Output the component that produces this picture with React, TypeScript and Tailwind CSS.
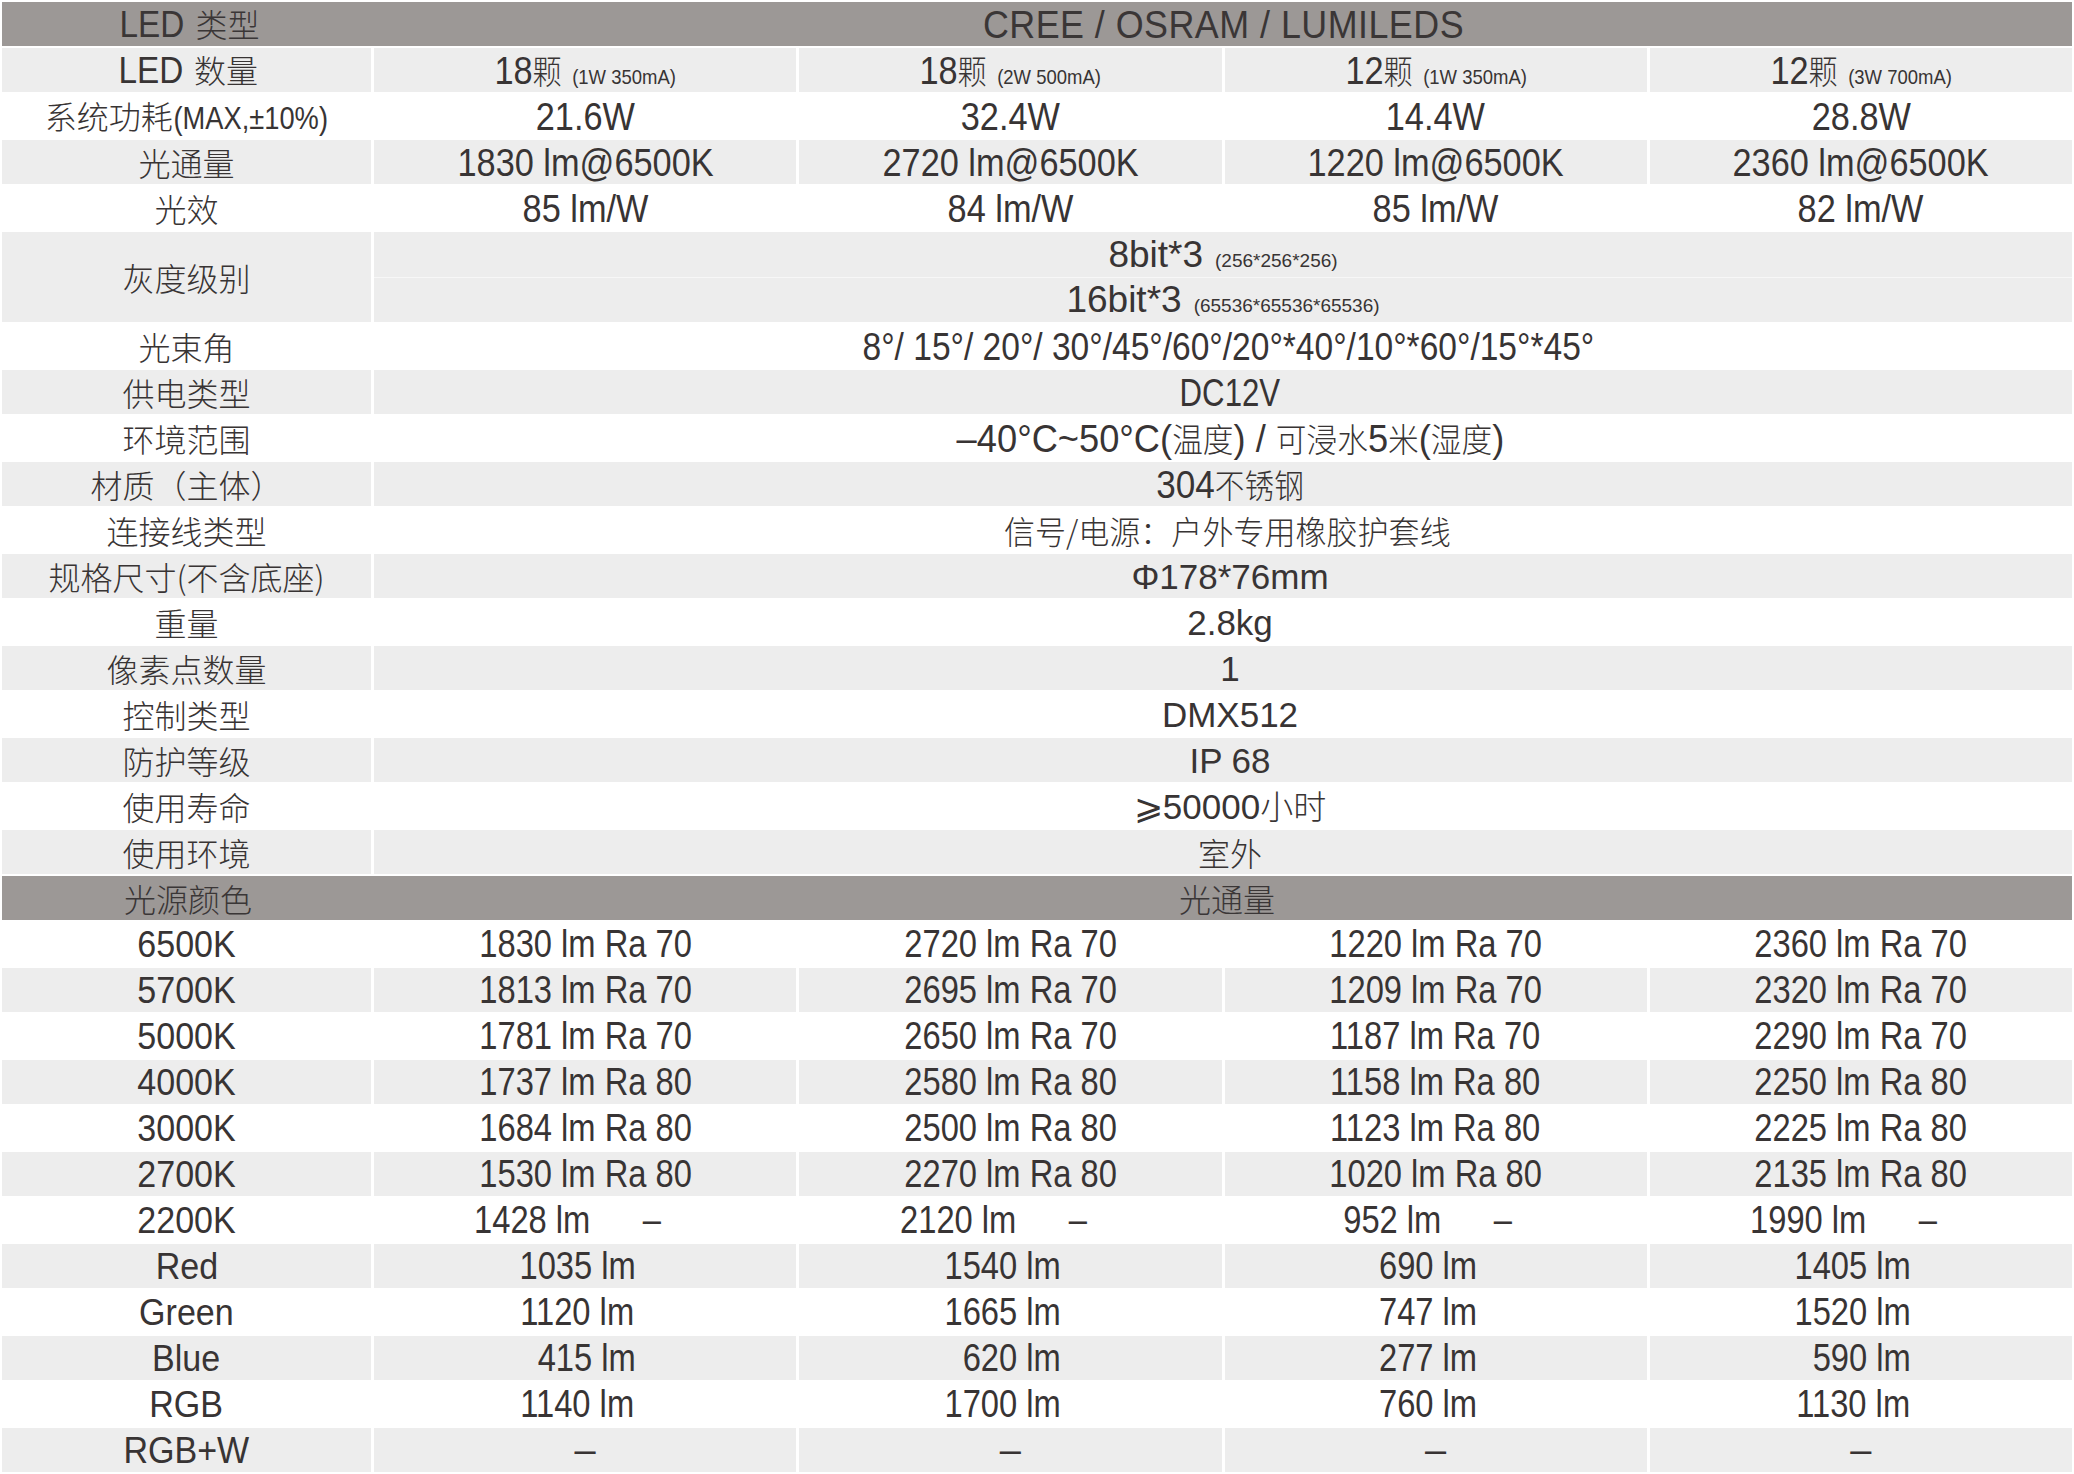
import type { ReactNode } from 'react'

const NARROW = "font-['Liberation_Sans','Noto_Sans_CJK_SC',sans-serif]"
const CJK = "font-['Noto_Sans_CJK_SC','Liberation_Sans',sans-serif] font-light"
const WIDE = "font-['Liberation_Sans','Noto_Sans_CJK_SC',sans-serif]"

type CellProps = { children?: ReactNode; gray?: boolean; className?: string; sx?: string }

function Cell({ children, gray, className = '', sx = '' }: CellProps) {
  return (
    <div
      className={`flex items-center justify-center leading-none text-[#383434] ${
        gray ? 'bg-[#ededed]' : 'bg-white'
      } ${className}`}
    >
      <span className={`whitespace-pre ${sx}`}>{children}</span>
    </div>
  )
}

function Label({ children, gray, className = '' }: CellProps) {
  return (
    <Cell gray={gray} className={`${CJK} text-[32px] ${className}`}>
      {children}
    </Cell>
  )
}

function Small({ children, className = 'text-[21px]' }: { children: ReactNode; className?: string }) {
  return <span className={`${NARROW} ml-[12px] ${className}`}>{children}</span>
}

// keeps three-digit values lined up with four-digit ones
function Pad() {
  return <span className="invisible">0</span>
}

// dash that sits where "Ra 70" would be
function NoRa() {
  return (
    <span className="ml-[0.55em] inline-grid">
      <span className="invisible col-start-1 row-start-1">Ra 70</span>
      <span className="col-start-1 row-start-1 text-center">–</span>
    </span>
  )
}

function Z({ children }: { children: ReactNode }) {
  return <span className={`${CJK} text-[33px]`}>{children}</span>
}

function Header({ label, value }: { label: ReactNode; value: ReactNode }) {
  return (
    <div className="col-span-5 flex bg-[#9c9896] leading-none text-[#3a3636]">
      <div className="flex w-[372px] items-center justify-center whitespace-pre">{label}</div>
      <div className="flex flex-1 items-center justify-center whitespace-pre">{value}</div>
    </div>
  )
}

function Row({ label, gray, children }: { label: ReactNode; gray: boolean; children: ReactNode }) {
  return (
    <>
      <Label gray={gray}>{label}</Label>
      {children}
    </>
  )
}

const leds = [
  ['18', '(1W 350mA)'],
  ['18', '(2W 500mA)'],
  ['12', '(1W 350mA)'],
  ['12', '(3W 700mA)'],
]

const topRows: { label: ReactNode; values: string[]; gray: boolean }[] = [
  {
    label: (
      <>
        系统功耗
        <span className={`${NARROW} -mx-[10px] inline-block scale-x-[0.88] text-[31px]`}>(MAX,±10%)</span>
      </>
    ),
    values: ['21.6W', '32.4W', '14.4W', '28.8W'],
    gray: false,
  },
  {
    label: '光通量',
    values: ['1830 lm@6500K', '2720 lm@6500K', '1220 lm@6500K', '2360 lm@6500K'],
    gray: true,
  },
  { label: '光效', values: ['85 lm/W', '84 lm/W', '85 lm/W', '82 lm/W'], gray: false },
]

const flux: { label: string; values: ReactNode[] }[] = [
  { label: '6500K', values: ['1830 lm Ra 70', '2720 lm Ra 70', '1220 lm Ra 70', '2360 lm Ra 70'] },
  { label: '5700K', values: ['1813 lm Ra 70', '2695 lm Ra 70', '1209 lm Ra 70', '2320 lm Ra 70'] },
  { label: '5000K', values: ['1781 lm Ra 70', '2650 lm Ra 70', '1187 lm Ra 70', '2290 lm Ra 70'] },
  { label: '4000K', values: ['1737 lm Ra 80', '2580 lm Ra 80', '1158 lm Ra 80', '2250 lm Ra 80'] },
  { label: '3000K', values: ['1684 lm Ra 80', '2500 lm Ra 80', '1123 lm Ra 80', '2225 lm Ra 80'] },
  { label: '2700K', values: ['1530 lm Ra 80', '2270 lm Ra 80', '1020 lm Ra 80', '2135 lm Ra 80'] },
  {
    label: '2200K',
    values: [
      <>1428 lm<NoRa /></>,
      <>2120 lm<NoRa /></>,
      <><Pad />952 lm<NoRa /></>,
      <>1990 lm<NoRa /></>,
    ],
  },
]

const colours: { label: string; values: ReactNode[] }[] = [
  { label: 'Red', values: ['1035 lm', '1540 lm', '690 lm', '1405 lm'] },
  { label: 'Green', values: ['1120 lm', '1665 lm', '747 lm', '1520 lm'] },
  { label: 'Blue', values: [<><Pad />415 lm</>, <><Pad />620 lm</>, '277 lm', <><Pad />590 lm</>] },
  { label: 'RGB', values: ['1140 lm', '1700 lm', '760 lm', '1130 lm'] },
]

function FluxLabel({ children }: { children: ReactNode }) {
  return <span className={`${NARROW} inline-block scale-x-[0.92] text-[37px]`}>{children}</span>
}

export default function App() {
  return (
    <div className="min-h-screen bg-white">
      <div className="grid auto-rows-[44px] grid-cols-[369px_repeat(4,minmax(0,1fr))] gap-x-[3px] gap-y-[2px] p-[2px]">
        <Header
          label={
            <span className={`${CJK} text-[32px]`}>
              <span className={`${NARROW} inline-block scale-x-[0.9] text-[37px]`}>LED</span> 类型
            </span>
          }
          value={
            <span className={`${NARROW} inline-block scale-x-[0.92] text-[39px] tracking-[0.5px]`}>
              CREE / OSRAM / LUMILEDS
            </span>
          }
        />

        <Label gray>
          <span className={`${NARROW} inline-block scale-x-[0.9] text-[37px]`}>LED</span> 数量
        </Label>
        {leds.map(([n, spec], i) => (
          <Cell key={i} gray className={`${NARROW} text-[39px]`} sx="inline-block scale-x-[0.88]">
            {n}
            <Z>颗</Z>
            <Small>{spec}</Small>
          </Cell>
        ))}

        {topRows.map((row, r) => (
          <Row key={r} label={row.label} gray={row.gray}>
            {row.values.map((v, i) => (
              <Cell key={i} gray={row.gray} className={`${NARROW} text-[39px]`} sx="inline-block scale-x-[0.88]">
                {v}
              </Cell>
            ))}
          </Row>
        ))}

        <Label gray className="row-span-2">
          灰度级别
        </Label>
        <div className="col-span-4 row-span-2 flex flex-col bg-[#ededed] leading-none text-[#383434]">
          <div className={`${NARROW} flex flex-1 items-center justify-center border-b border-[#f7f7f7] text-[37px]`}>
            <span className="whitespace-pre">
              8bit*3<Small className="text-[19px]">(256*256*256)</Small>
            </span>
          </div>
          <div className={`${NARROW} flex flex-1 items-center justify-center text-[37px]`}>
            <span className="whitespace-pre">
              16bit*3<Small className="text-[19px]">(65536*65536*65536)</Small>
            </span>
          </div>
        </div>

        <Label>光束角</Label>
        <Cell className={`col-span-4 pl-[10px] ${NARROW} text-[39px]`} sx="inline-block scale-x-[0.86]">
          {'8°/ 15°/ 20°/ 30°/45°/60°/20°*40°/10°*60°/15°*45°'}
        </Cell>

        <Label gray>供电类型</Label>
        <Cell gray className={`col-span-4 pl-[14px] ${NARROW} text-[39px]`} sx="inline-block scale-x-[0.8]">
          DC12V
        </Cell>

        <Label>环境范围</Label>
        <Cell className={`col-span-4 pl-[14px] ${NARROW} text-[39px]`} sx="inline-block scale-x-[0.93]">
          {'–40°C~50°C('}
          <Z>温度</Z>
          {') / '}
          <Z>可浸水</Z>5<Z>米</Z>(<Z>湿度</Z>)
        </Cell>

        <Label gray>材质（主体）</Label>
        <Cell gray className={`col-span-4 pl-[14px] ${NARROW} text-[39px]`} sx="inline-block scale-x-[0.9]">
          304<Z>不锈钢</Z>
        </Cell>

        <Label>连接线类型</Label>
        <Cell className={`col-span-4 pl-[8px] ${CJK} text-[32px]`} sx="inline-block scale-x-[0.97]">
          信号/电源：户外专用橡胶护套线
        </Cell>

        <Label gray>规格尺寸(不含底座)</Label>
        <Cell gray className={`col-span-4 pl-[14px] ${WIDE} text-[35px]`}>
          Φ178*76mm
        </Cell>

        <Label>重量</Label>
        <Cell className={`col-span-4 pl-[14px] ${WIDE} text-[35px]`}>2.8kg</Cell>

        <Label gray>像素点数量</Label>
        <Cell gray className={`col-span-4 pl-[14px] ${WIDE} text-[35px]`}>
          1
        </Cell>

        <Label>控制类型</Label>
        <Cell className={`col-span-4 pl-[14px] ${WIDE} text-[35px]`}>DMX512</Cell>

        <Label gray>防护等级</Label>
        <Cell gray className={`col-span-4 pl-[14px] ${WIDE} text-[35px]`}>
          IP 68
        </Cell>

        <Label>使用寿命</Label>
        <Cell className={`col-span-4 pl-[14px] ${WIDE} text-[35px]`}>
          ⩾50000<Z>小时</Z>
        </Cell>

        <Label gray>使用环境</Label>
        <Cell gray className={`col-span-4 pl-[14px] ${CJK} text-[32px]`}>
          室外
        </Cell>

        <Header
          label={<span className={`${CJK} text-[32px]`}>光源颜色</span>}
          value={<span className={`${CJK} pl-[8px] text-[32px]`}>光通量</span>}
        />

        {flux.map((row, r) => {
          const gray = r % 2 === 1
          return (
            <Row key={row.label} gray={gray} label={<FluxLabel>{row.label}</FluxLabel>}>
              {row.values.map((v, i) => (
                <Cell key={i} gray={gray} className={`${NARROW} text-[38px]`} sx="inline-block scale-x-[0.86]">
                  {v}
                </Cell>
              ))}
            </Row>
          )
        })}

        {colours.map((row, r) => {
          const gray = r % 2 === 0
          return (
            <Row key={row.label} gray={gray} label={<FluxLabel>{row.label}</FluxLabel>}>
              {row.values.map((v, i) => (
                <Cell key={i} gray={gray} className={`pr-[16px] ${NARROW} text-[38px]`} sx="inline-block scale-x-[0.86]">
                  {v}
                </Cell>
              ))}
            </Row>
          )
        })}

        <Row gray label={<FluxLabel>RGB+W</FluxLabel>}>
          {[0, 1, 2, 3].map((i) => (
            <Cell key={i} gray className={`${NARROW} text-[38px]`}>
              –
            </Cell>
          ))}
        </Row>
      </div>
    </div>
  )
}
